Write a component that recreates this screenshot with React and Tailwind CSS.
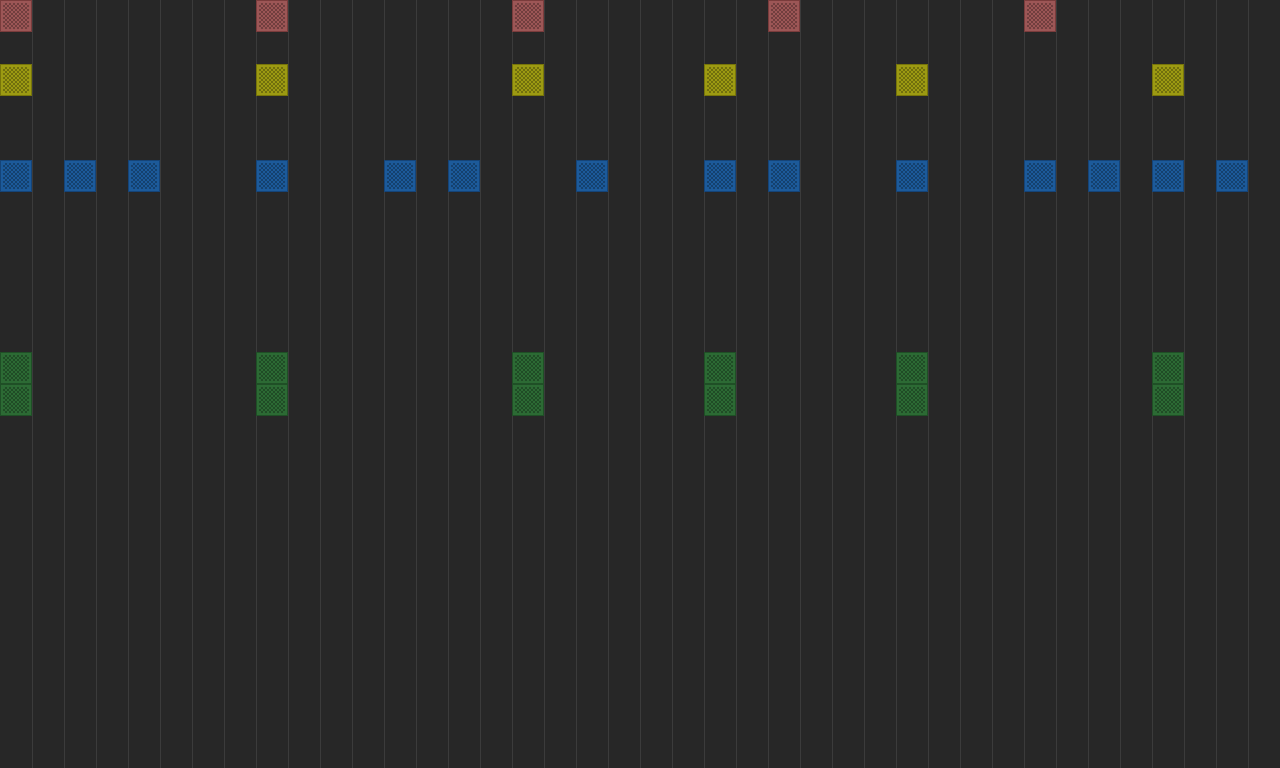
import React from "react";

const ROWS = 24;
const COLS = 40;

const tracks = [
  { row: 0, cols: [0, 8, 16, 24, 32], color: "red" },
  { row: 2, cols: [0, 8, 16, 22, 28, 36], color: "yellow" },
  { row: 5, cols: [0, 2, 4, 8, 12, 14, 18, 22, 24, 28, 32, 34, 36, 38], color: "blue" },
  { row: 11, cols: [0, 8, 16, 22, 28, 36], color: "green" },
  { row: 12, cols: [0, 8, 16, 22, 28, 36], color: "green" },
];

const padStyles = {
  red: "bg-[#9c5656] border-[#7a3c3c]",
  yellow: "bg-[#9c9a12] border-[#77750a]",
  blue: "bg-[#1c5a9a] border-[#154478]",
  green: "bg-[#2c6a34] border-[#1f4f26]",
};

const Pad = ({ color }) => (
  <div className={`w-8 h-8 border ${padStyles[color]} p-[2px]`}>
    <div className="w-full h-full bg-[repeating-conic-gradient(rgba(0,0,0,0.28)_0_25%,transparent_0_50%)] bg-[length:4px_4px]" />
  </div>
);

export default function App() {
  const lookup = {};
  tracks.forEach((t) => t.cols.forEach((c) => (lookup[`${t.row}-${c}`] = t.color)));

  return (
    <div className="w-[1280px] h-[768px] bg-[#272727] overflow-hidden grid grid-cols-[repeat(40,32px)] grid-rows-[repeat(24,32px)]">
      {Array.from({ length: ROWS * COLS }).map((_, i) => {
        const r = Math.floor(i / COLS);
        const c = i % COLS;
        const color = lookup[`${r}-${c}`];
        if (color) return <Pad key={i} color={color} />;
        return (
          <div
            key={i}
            className={c === 0 ? "w-8 h-8" : "w-8 h-8 border-l border-[#3b3b3b]"}
          />
        );
      })}
    </div>
  );
}
